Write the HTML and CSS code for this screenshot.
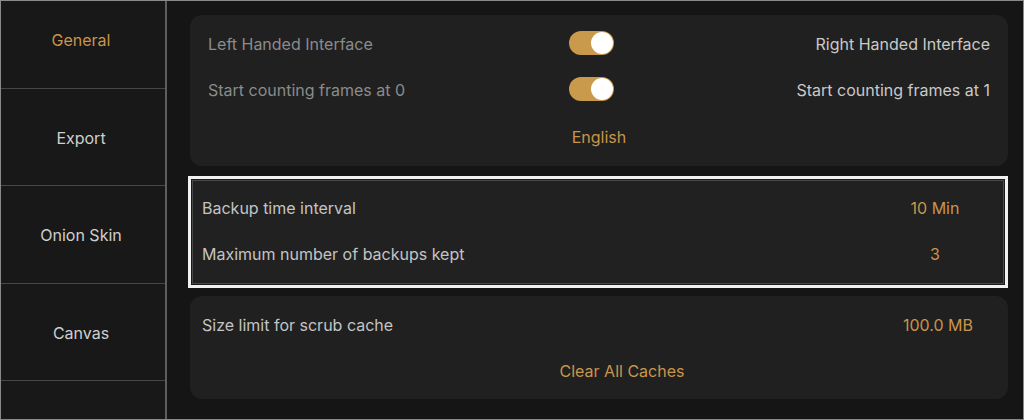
FILE: index.html
```html
<!DOCTYPE html>
<html>
<head>
<meta charset="utf-8">
<link rel="stylesheet" href="styles.css">
</head>
<body>
<div class="frame">
  <nav class="sidebar">
    <div class="nav-list">
      <div class="nav-item active">General</div>
      <div class="nav-item">Export</div>
      <div class="nav-item">Onion Skin</div>
      <div class="nav-item">Canvas</div>
      <div class="nav-item"></div>
    </div>
  </nav>
  <main class="main">
    <section class="card card-prefs">
      <div class="toggle-row">
        <span class="lbl-dim">Left Handed Interface</span>
        <span class="toggle"><span class="knob"></span></span>
        <span class="lbl-right">Right Handed Interface</span>
      </div>
      <div class="toggle-row">
        <span class="lbl-dim">Start counting frames at 0</span>
        <span class="toggle"><span class="knob"></span></span>
        <span class="lbl-right">Start counting frames at 1</span>
      </div>
      <div class="center-row"><span class="gold">English</span></div>
    </section>

    <section class="card card-backup">
      <div class="value-row">
        <span class="lbl">Backup time interval</span>
        <span class="val">10 Min</span>
      </div>
      <div class="value-row">
        <span class="lbl">Maximum number of backups kept</span>
        <span class="val">3</span>
      </div>
    </section>

    <section class="card card-cache">
      <div class="value-row">
        <span class="lbl">Size limit for scrub cache</span>
        <span class="val">100.0 MB</span>
      </div>
      <div class="center-row shifted"><span class="gold">Clear All Caches</span></div>
    </section>
  </main>
</div>
</body>
</html>
```

FILE: styles.css
```css
* { box-sizing: border-box; }
html, body {
  margin: 0;
  padding: 0;
  background: #141414;
}
body {
  width: 1024px;
  height: 420px;
  font-family: Inter, "Liberation Sans", Arial, sans-serif;
  font-size: 16px;
  overflow: hidden;
}
.frame {
  width: 1024px;
  height: 420px;
  border: 1px solid #8a8a8a;
  display: flex;
  overflow: hidden;
  background: #151515;
}
.sidebar {
  width: 166px;
  flex: none;
  background: #181818;
  border-right: 2px solid #5e5e5e;
  overflow: hidden;
}
.nav-list {
  margin-top: -10px;
}
.nav-item {
  height: 97.5px;
  border-bottom: 1px solid #474747;
  display: flex;
  align-items: center;
  justify-content: center;
  padding-top: 2px;
  padding-right: 4px;
  color: #cfcfcf;
}
.nav-item.active { color: #c9954a; }

.main {
  flex: 1;
  padding: 14px 15px 0 23px;
  display: flex;
  flex-direction: column;
}
.card {
  background: #202020;
  border-radius: 12px;
}
.card-prefs {
  padding: 6px 18px 7px 18px;
}
.toggle-row {
  height: 46px;
  display: grid;
  grid-template-columns: 361px 44px 1fr;
  align-items: center;
}
.lbl-dim { color: #8b8b8b; }
.lbl-right { color: #c9c9c9; text-align: right; }
.toggle {
  width: 45px;
  height: 24px;
  border-radius: 12px;
  background: #c99a4c;
  display: flex;
  align-items: center;
  justify-content: flex-end;
  padding-right: 1px;
  margin-top: -3px;
}
.knob {
  width: 22px;
  height: 22px;
  border-radius: 50%;
  background: #ffffff;
}
.center-row {
  height: 46px;
  display: flex;
  align-items: center;
  justify-content: center;
}
.card-prefs .center-row { padding-top: 2px; }
.center-row.shifted { padding-left: 34px; }
.gold { color: #c9954a; }

.card-backup {
  margin: 10px 0 0 -2px;
  border-radius: 0;
  border: 3px solid #f2f2f2;
  box-shadow: inset 0 0 0 1px #1a1a1a, inset 0 0 0 2px #4a4a4a;
  background: #212121;
  padding: 6px 0 8px 11px;
}
.card-cache {
  margin-top: 8px;
  padding: 5px 0 5px 12px;
}
.value-row {
  height: 46px;
  display: flex;
  align-items: center;
  justify-content: space-between;
}
.card-cache .value-row { height: 47px; }
.lbl { color: #c4c4c4; }
.val {
  width: 100px;
  margin-right: 20px;
  text-align: center;
  color: #c9954a;
}
```
